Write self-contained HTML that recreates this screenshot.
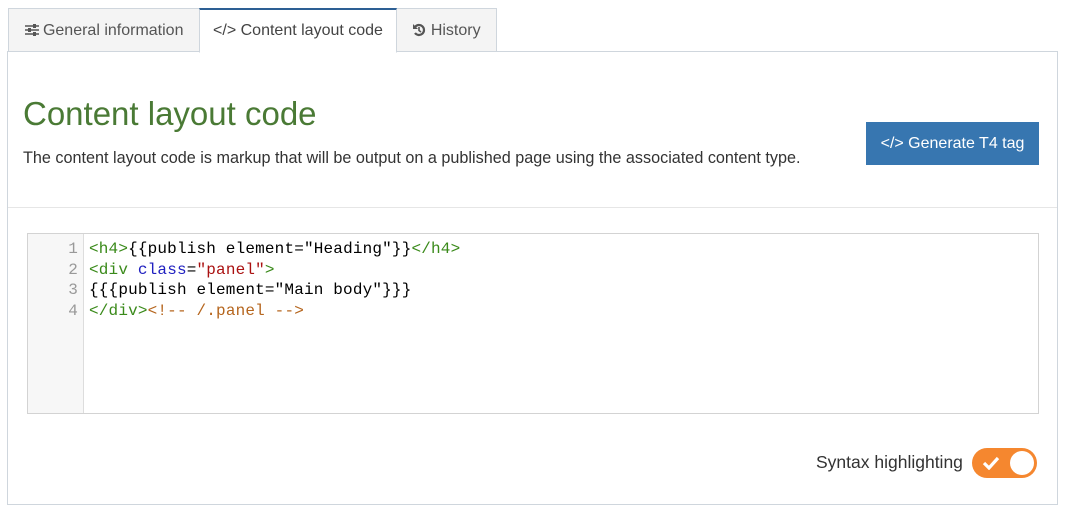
<!DOCTYPE html>
<html><head><meta charset="utf-8"><style>
*{box-sizing:border-box;margin:0;padding:0}
body{width:1066px;height:513px;background:#fff;font-family:"Liberation Sans",sans-serif;color:#333;position:relative;overflow:hidden}
.tab{position:absolute;top:8px;height:44px;border:1px solid #cfd6dd;background:#f4f4f4;font-size:16px;color:#555;line-height:44px;text-align:center}
.panel{position:absolute;left:7px;top:51px;width:1051px;height:454px;border:1px solid #cfd6dd}
h1{position:absolute;left:23px;top:95px;font-size:33px;font-weight:normal;color:#4a7a35}
.desc{position:absolute;left:23px;top:149px;font-size:16.2px;color:#333}
.btn{position:absolute;left:866px;top:122px;width:173px;height:43px;background:#3776b0;color:#fff;font-size:16px;line-height:43px;text-align:center}
.hr{position:absolute;left:8px;top:207px;width:1049px;height:1px;background:#e6e6e6}
.code{position:absolute;left:27px;top:233px;width:1012px;height:181px;border:1px solid #d3d3d3}
.gut{position:absolute;left:0;top:0;width:56px;height:179px;background:#f7f7f7;border-right:1px solid #ddd}
pre{font-family:"Liberation Mono",monospace;font-size:16px;letter-spacing:0.17px;line-height:20.5px;position:absolute;top:5px}
.t{color:#3a8a1a}.a{color:#2020c0}.s{color:#a11}.c{color:#b5651d}
.sh{position:absolute;left:816px;top:452px;font-size:17.5px;color:#333}
.tg{position:absolute;left:972px;top:448px;width:65px;height:30px;border-radius:15px;background:#f5872f}
.kn{position:absolute;right:3px;top:3px;width:24px;height:24px;border-radius:12px;background:#fff}
</style></head><body>
<div class="tab" style="left:8px;width:192px">
<svg width="14" height="12" style="vertical-align:-1px" viewBox="0 0 14 12"><g stroke="#555" stroke-width="1.5"><path d="M0 2h14M0 6h14M0 10h14"/></g><g fill="#555"><rect x="8" y="0" width="3" height="4"/><rect x="3" y="4" width="3" height="4"/><rect x="8" y="8" width="3" height="4"/></g></svg> General information</div>
<div class="tab" style="left:199px;width:198px;background:#fff;border-top:2px solid #2d5f94;border-bottom-color:#fff;height:45px;z-index:2;color:#444;line-height:42px">&lt;/&gt; Content layout code</div>
<div class="tab" style="left:396px;width:101px">
<svg width="14" height="14" style="vertical-align:-2px" viewBox="0 0 14 14"><path d="M3 4A5 5 0 1 1 3 10" fill="none" stroke="#555" stroke-width="2.2"/><path d="M1 1v5h5z" fill="#555"/><path d="M7 4v3.5l2 1.5" fill="none" stroke="#555" stroke-width="1.6"/></svg> History</div>
<div class="panel"></div>
<h1>Content layout code</h1>
<div class="desc">The content layout code is markup that will be output on a published page using the associated content type.</div>
<div class="btn">&lt;/&gt; Generate T4 tag</div>
<div class="hr"></div>
<div class="code"><div class="gut"></div>
<pre style="left:0;width:50px;text-align:right;color:#999">1
2
3
4</pre>
<pre style="left:61px;color:#000"><span class="t">&lt;h4&gt;</span>{{publish element="Heading"}}<span class="t">&lt;/h4&gt;</span>
<span class="t">&lt;div</span> <span class="a">class</span>=<span class="s">"panel"</span><span class="t">&gt;</span>
{{{publish element="Main body"}}}
<span class="t">&lt;/div&gt;</span><span class="c">&lt;!-- /.panel --&gt;</span></pre></div>
<div class="sh">Syntax highlighting</div>
<div class="tg"><svg style="position:absolute;left:10px;top:8px" width="18" height="14" viewBox="0 0 18 14"><path d="M2 7l5 5L16 2" fill="none" stroke="#fff" stroke-width="3.2"/></svg><div class="kn"></div></div>
</body></html>
